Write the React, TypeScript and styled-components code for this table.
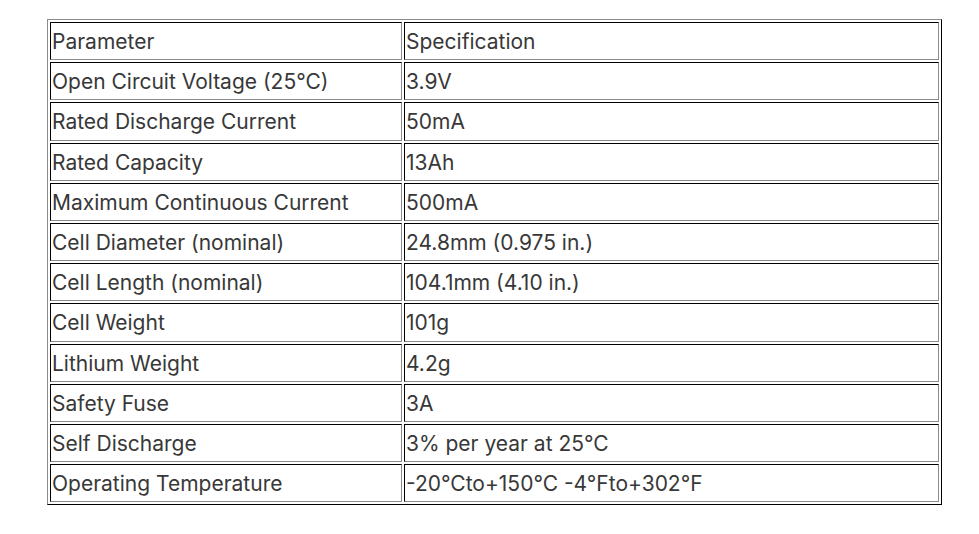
import styled, { createGlobalStyle } from "styled-components";

const rows: [string, string][] = [
  ["Parameter", "Specification"],
  ["Open Circuit Voltage (25°C)", "3.9V"],
  ["Rated Discharge Current", "50mA"],
  ["Rated Capacity", "13Ah"],
  ["Maximum Continuous Current", "500mA"],
  ["Cell Diameter (nominal)", "24.8mm (0.975 in.)"],
  ["Cell Length (nominal)", "104.1mm (4.10 in.)"],
  ["Cell Weight", "101g"],
  ["Lithium Weight", "4.2g"],
  ["Safety Fuse", "3A"],
  ["Self Discharge", "3% per year at 25°C"],
  ["Operating Temperature", "-20°Cto+150°C -4°Fto+302°F"],
];

const GlobalStyle = createGlobalStyle`
  body {
    margin: 0;
    background: #ffffff;
    font-family: Inter, "Noto Sans", sans-serif;
  }
`;

const Page = styled.div`
  padding: 19px 0 0 47px;
`;

const SpecTable = styled.table`
  width: 895px;
  border-collapse: separate;
  border-spacing: 2px;
  border-style: solid;
  border-width: 1px;
  border-color: #8c8c8c #000000 #000000 #8c8c8c;
`;

const Cell = styled.td<{ $first?: boolean }>`
  width: ${(p) => (p.$first ? "348px" : "auto")};
  padding: 2px 1px 0;
  border-style: solid;
  border-width: 1px;
  border-color: #000000 #8c8c8c #8c8c8c #000000;
  font-size: 21px;
  line-height: 34.2px;
  color: #383838;
  text-align: left;
  vertical-align: middle;
  white-space: nowrap;
`;

export default function App() {
  return (
    <>
      <GlobalStyle />
      <Page>
        <SpecTable>
          <tbody>
            {rows.map(([name, value]) => (
              <tr key={name}>
                <Cell $first>{name}</Cell>
                <Cell>{value}</Cell>
              </tr>
            ))}
          </tbody>
        </SpecTable>
      </Page>
    </>
  );
}
